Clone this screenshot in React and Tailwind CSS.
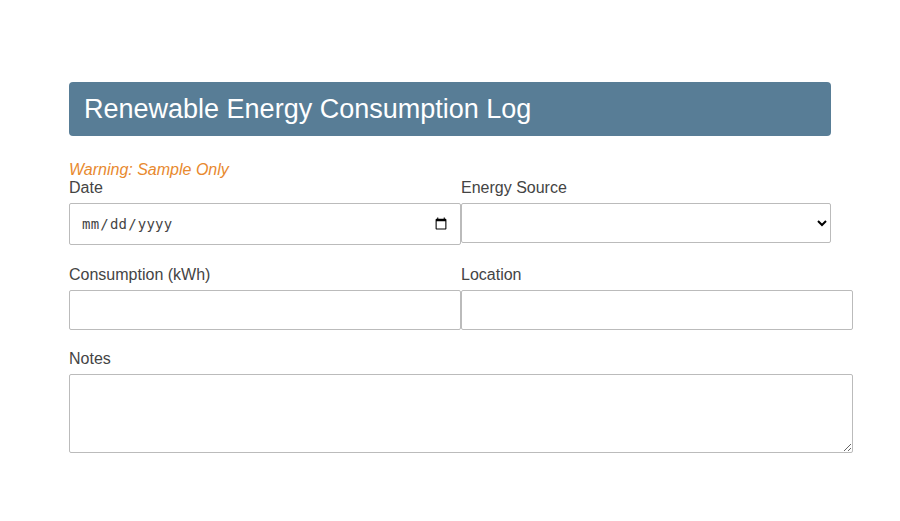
import React from "react";

export default function App() {
  return (
    <div className="min-h-[521px] w-[900px] bg-white pt-[82px] pl-[69px]" style={{ fontFamily: '"Liberation Sans", Arial, sans-serif' }}>
      <div className="w-[784px]">
        <div className="flex h-[54px] w-[762px] items-center rounded-[4px] bg-[#587d96] pl-[15px]">
          <h1 className="text-[27px] leading-none text-white">Renewable Energy Consumption Log</h1>
        </div>
        <div className="mt-[25px] text-[16px] italic leading-[18px] text-[#e8892e]">Warning: Sample Only</div>
        <div className="grid grid-cols-[392px_392px]">
          <div className="mb-[21px] flex flex-col">
            <label className="mb-[6px] text-[16px] leading-[18px] text-[#444]">Date</label>
            <input type="date" className="h-[42px] w-[392px] rounded-[2px] border border-[#bbb] pl-[11px] pr-[10px] text-[14px] tracking-[0.2px] text-[#444]" style={{ fontFamily: '"DejaVu Sans Mono", monospace' }} />
          </div>
          <div className="mb-[21px] flex flex-col">
            <label className="mb-[6px] text-[16px] leading-[18px] text-[#444]">Energy Source</label>
            <select className="h-[40px] w-[370px] appearance-auto rounded-[2px] border border-[#bbb] bg-white px-[8px] text-[14px]">
              <option></option>
            </select>
          </div>
          <div className="mb-[20px] flex flex-col">
            <label className="mb-[6px] text-[16px] leading-[18px] text-[#444]">Consumption (kWh)</label>
            <input type="text" className="h-[40px] w-[392px] rounded-[2px] border border-[#bbb] px-[10px]" />
          </div>
          <div className="mb-[20px] flex flex-col">
            <label className="mb-[6px] text-[16px] leading-[18px] text-[#444]">Location</label>
            <input type="text" className="h-[40px] w-[392px] rounded-[2px] border border-[#bbb] px-[10px]" />
          </div>
        </div>
        <div className="flex flex-col">
          <label className="mb-[6px] text-[16px] leading-[18px] text-[#444]">Notes</label>
          <textarea className="h-[79px] w-[784px] rounded-[2px] border border-[#bbb] px-[10px]" />
        </div>
      </div>
    </div>
  );
}
